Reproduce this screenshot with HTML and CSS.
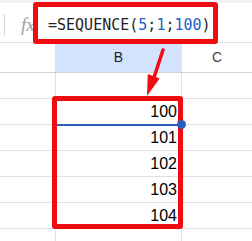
FILE: index.html
```html
<!DOCTYPE html>
<html lang="en">
<head>
    <meta charset="UTF-8">
    <meta name="viewport" content="width=device-width, initial-scale=1.0">
    <title>SEQUENCE</title>
    <link rel="stylesheet" href="styles.css">
</head>
<body>
    <div class="sheet">
        <div class="top-strip"></div>

        <div class="formula-bar">
            <span class="divider"></span>
            <span class="fx">fx</span>
            <span class="formula">=SEQUENCE(<span class="num">5</span>;<span class="num">1</span>;<span class="num">100</span>)</span>
        </div>

        <div class="grid">
            <div class="row header">
                <div class="cell col-a"></div>
                <div class="cell col-b selected">B</div>
                <div class="cell col-c">C</div>
            </div>
            <div class="row">
                <div class="cell col-a"></div>
                <div class="cell col-b"></div>
                <div class="cell col-c"></div>
            </div>
            <div class="row">
                <div class="cell col-a"></div>
                <div class="cell col-b active">100</div>
                <div class="cell col-c"></div>
            </div>
            <div class="row">
                <div class="cell col-a"></div>
                <div class="cell col-b">101</div>
                <div class="cell col-c"></div>
            </div>
            <div class="row">
                <div class="cell col-a"></div>
                <div class="cell col-b">102</div>
                <div class="cell col-c"></div>
            </div>
            <div class="row">
                <div class="cell col-a"></div>
                <div class="cell col-b">103</div>
                <div class="cell col-c"></div>
            </div>
            <div class="row">
                <div class="cell col-a"></div>
                <div class="cell col-b">104</div>
                <div class="cell col-c"></div>
            </div>
            <div class="row">
                <div class="cell col-a"></div>
                <div class="cell col-b"></div>
                <div class="cell col-c"></div>
            </div>
        </div>

        <!-- red annotations -->
        <div class="callout callout-formula"></div>
        <div class="callout callout-range"></div>
        <svg class="arrow" width="252" height="241" viewBox="0 0 252 241">
            <line x1="163" y1="50" x2="154.5" y2="76" stroke="#f00d12" stroke-width="3.5" stroke-linecap="round"/>
            <polygon points="147,96 159.6,78.4 147.8,74" fill="#f00d12"/>
        </svg>
    </div>
</body>
</html>
```

FILE: styles.css
```css
* {
    box-sizing: border-box;
    margin: 0;
    padding: 0;
}

body {
    background: #fff;
    font-family: 'Liberation Sans', Arial, sans-serif;
    color: #000;
}

.sheet {
    position: relative;
    width: 252px;
    height: 241px;
    overflow: hidden;
}

.top-strip {
    height: 3px;
    background: #f0f4f9;
}

.formula-bar {
    display: flex;
    align-items: center;
    height: 40px;
    padding-left: 4px;
    padding-top: 4px;
    border-bottom: 1px solid #e1e1e1;
}

.divider {
    width: 1px;
    height: 22px;
    background: #d6d8da;
}

.fx {
    width: 43px;
    padding-left: 16px;
    font-family: 'Liberation Serif', serif;
    font-style: italic;
    font-size: 19px;
    color: #9ea2a6;
}

.formula {
    font-family: 'DejaVu Sans Mono', 'Liberation Mono', monospace;
    font-size: 15px;
    color: #1f1f1f;
    white-space: nowrap;
}

.formula .num {
    color: #2260c8;
}

.row {
    display: flex;
    height: 26px;
    border-bottom: 1px solid #e1e1e1;
}

.row.header {
    height: 30px;
    border-bottom-color: #d4d4d4;
}

.cell {
    border-right: 1px solid #e1e1e1;
    font-size: 16px;
    line-height: 25px;
}

.col-a {
    width: 56px;
}

.col-b {
    position: relative;
    width: 126px;
    text-align: right;
    padding-right: 4px;
}

.col-c {
    flex: 1;
    border-right: none;
}

.header .cell {
    font-size: 14px;
    line-height: 29px;
    text-align: center;
    color: #444746;
    padding: 0;
}

.header .selected {
    background: #d3e3fd;
    color: #1f1f1f;
}

.active::after {
    content: "";
    position: absolute;
    left: 0;
    right: -1px;
    bottom: -2px;
    height: 2px;
    background: #2a5fbd;
}

.active::before {
    content: "";
    position: absolute;
    right: -5px;
    bottom: -5px;
    width: 9px;
    height: 9px;
    border-radius: 50%;
    background: #2a5fbd;
    z-index: 4;
}

.callout {
    position: absolute;
    border: 5px solid #f00d12;
    border-radius: 3px;
    z-index: 2;
}

.callout-formula {
    left: 33px;
    top: 2px;
    width: 185px;
    height: 42px;
}

.callout-range {
    left: 52px;
    top: 96px;
    width: 131px;
    height: 133px;
}

.arrow {
    position: absolute;
    left: 0;
    top: 0;
    z-index: 3;
}
```
